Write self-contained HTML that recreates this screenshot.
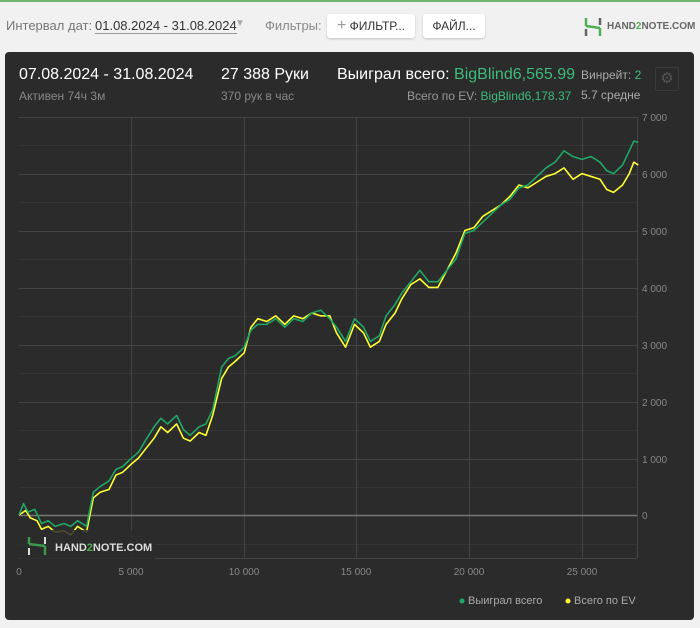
<!DOCTYPE html>
<html><head><meta charset="utf-8"><style>
body{margin:0;width:700px;height:628px;background:#f1f1f1;font-family:"Liberation Sans",sans-serif;position:relative;overflow:hidden}
.top{position:absolute;left:0;top:0;width:700px;height:2px;background:#6fb56f}
.t{position:absolute;white-space:nowrap}
.btn{position:absolute;background:#fff;border-radius:3px;box-shadow:0 1px 2px rgba(0,0,0,.2);font-size:12px;color:#333;line-height:24px;text-align:center}
.panel{position:absolute;left:5px;top:52px;width:689px;height:568px;background:#2b2b2b;border-radius:4px}
.ax{font-size:10px;color:#777}
</style></head><body>
<div class="top"></div>
<div class="t" style="left:6px;top:18px;font-size:13px;color:#777">Интервал дат:</div>
<div class="t" style="left:95px;top:18px;font-size:13px;color:#333;border-bottom:1px solid #999">01.08.2024 - 31.08.2024</div>
<div class="t" style="left:235px;top:18px;font-size:10px;color:#aaa">▼</div>
<div class="t" style="left:265px;top:18px;font-size:13px;color:#888">Фильтры:</div>
<div class="btn" style="left:327px;top:14px;width:88px"><span style="color:#999;font-size:16px">+</span> ФИЛЬТР...</div>
<div class="btn" style="left:423px;top:14px;width:62px">ФАЙЛ...</div>
<svg style="position:absolute;left:583px;top:16px" width="20" height="22"><path d="M3 2v8M3 10l14 2M17 12v8" stroke="#4caf50" stroke-width="2.5" fill="none"/><path d="M3 13v7M17 2v7" stroke="#666" stroke-width="2.5"/></svg>
<div class="t" style="left:607px;top:21px;font-size:10px;font-weight:bold;color:#666">HAND<span style="color:#4caf50">2</span>NOTE.COM</div>
<div class="panel"></div>
<div class="t" style="left:19px;top:66px;font-size:16px;color:#fff">07.08.2024 - 31.08.2024</div>
<div class="t" style="left:19px;top:89px;font-size:12px;color:#888">Активен 74ч 3м</div>
<div class="t" style="left:221px;top:66px;font-size:16px;color:#fff">27 388 Руки</div>
<div class="t" style="left:221px;top:89px;font-size:12px;color:#888">370 рук в час</div>
<div class="t" style="left:337px;top:66px;font-size:16px;color:#fff">Выиграл всего: <span style="color:#3dbb7a">BigBlind6,565.99</span></div>
<div class="t" style="left:407px;top:89px;font-size:12px;color:#999">Всего по EV: <span style="color:#3dbb7a">BigBlind6,178.37</span></div>
<div class="t" style="left:581px;top:68px;font-size:12px;color:#aaa">Винрейт: <span style="color:#3dbb7a">2</span></div>
<div class="t" style="left:581px;top:88px;font-size:12px;color:#aaa">5.7 средне</div>
<div style="position:absolute;left:655px;top:67px;width:22px;height:22px;border:1px solid #3a3a3a;border-radius:2px;color:#555;font-size:15px;text-align:center;line-height:22px">⚙</div>
<svg style="position:absolute;left:0;top:0" width="700" height="628">
<g stroke="#353535" stroke-width="1">
<line x1="19" x2="637" y1="145.5" y2="145.5"/><line x1="19" x2="637" y1="202.5" y2="202.5"/><line x1="19" x2="637" y1="259.5" y2="259.5"/><line x1="19" x2="637" y1="316.5" y2="316.5"/><line x1="19" x2="637" y1="373.5" y2="373.5"/><line x1="19" x2="637" y1="430.5" y2="430.5"/><line x1="19" x2="637" y1="487.5" y2="487.5"/><line x1="19" x2="637" y1="544.5" y2="544.5"/>
</g>
<g stroke="#444" stroke-width="1">
<line x1="19" x2="637" y1="117.5" y2="117.5"/><line x1="19" x2="637" y1="174.5" y2="174.5"/><line x1="19" x2="637" y1="231.5" y2="231.5"/><line x1="19" x2="637" y1="288.5" y2="288.5"/><line x1="19" x2="637" y1="345.5" y2="345.5"/><line x1="19" x2="637" y1="402.5" y2="402.5"/><line x1="19" x2="637" y1="459.5" y2="459.5"/><line x1="19" x2="637" y1="558.5" y2="558.5"/>
<line x1="131.5" x2="131.5" y1="117" y2="558"/><line x1="244.5" x2="244.5" y1="117" y2="558"/><line x1="356.5" x2="356.5" y1="117" y2="558"/><line x1="469.5" x2="469.5" y1="117" y2="558"/><line x1="582.5" x2="582.5" y1="117" y2="558"/><line x1="637.5" x2="637.5" y1="117" y2="558"/>
</g>
<line x1="19" x2="637" y1="515.5" y2="515.5" stroke="#777" stroke-width="1.5"/>
<g transform="translate(19,515) scale(22.52,-56.9)" fill="none" stroke-width="1.6" stroke-linejoin="round">
<polyline vector-effect="non-scaling-stroke" stroke="#ffff33" points="0,0 0.3,0.08 0.5,-0.05 0.8,-0.1 1,-0.25 1.3,-0.2 1.6,-0.3 2,-0.28 2.3,-0.35 2.6,-0.2 3,-0.3 3.3,0.3 3.6,0.4 4,0.45 4.3,0.7 4.6,0.75 5,0.9 5.3,1.0 5.6,1.15 6,1.35 6.3,1.55 6.6,1.45 7,1.6 7.3,1.35 7.6,1.3 8,1.45 8.3,1.4 8.6,1.75 9,2.4 9.3,2.6 9.6,2.7 10,2.85 10.3,3.3 10.6,3.45 11,3.4 11.4,3.5 11.8,3.35 12.2,3.5 12.6,3.45 13,3.55 13.4,3.5 13.8,3.5 14.1,3.2 14.5,2.95 14.9,3.35 15.3,3.2 15.6,2.95 16,3.05 16.3,3.35 16.7,3.55 17,3.8 17.4,4.05 17.8,4.15 18.2,4.0 18.6,4.0 19,4.3 19.4,4.6 19.8,5.0 20.2,5.05 20.6,5.25 21,5.35 21.4,5.45 21.8,5.6 22.2,5.8 22.6,5.75 23,5.85 23.4,5.95 23.8,6.0 24.2,6.1 24.6,5.9 25,6.0 25.4,5.95 25.8,5.9 26.1,5.72 26.4,5.67 26.8,5.8 27.1,6.0 27.3,6.2 27.5,6.15"/>
<polyline vector-effect="non-scaling-stroke" stroke="#20a865" points="0,0 0.2,0.2 0.4,0.05 0.7,0.1 1,-0.15 1.3,-0.1 1.6,-0.2 2,-0.15 2.3,-0.2 2.6,-0.1 3,-0.2 3.3,0.4 3.6,0.5 4,0.6 4.3,0.8 4.6,0.85 5,1.0 5.3,1.1 5.6,1.3 6,1.55 6.3,1.7 6.6,1.6 7,1.75 7.3,1.5 7.6,1.4 8,1.55 8.3,1.6 8.6,1.85 9,2.6 9.3,2.75 9.6,2.8 10,2.95 10.3,3.25 10.6,3.35 11,3.35 11.4,3.45 11.8,3.3 12.2,3.45 12.6,3.4 13,3.55 13.4,3.6 13.8,3.45 14.1,3.3 14.5,3.05 14.9,3.45 15.3,3.3 15.6,3.05 16,3.15 16.3,3.5 16.7,3.7 17,3.9 17.4,4.1 17.8,4.3 18.2,4.1 18.6,4.1 19,4.3 19.4,4.5 19.8,4.95 20.2,5.0 20.6,5.15 21,5.3 21.4,5.45 21.8,5.55 22.2,5.75 22.6,5.8 23,5.95 23.4,6.1 23.8,6.2 24.2,6.4 24.6,6.3 25,6.25 25.4,6.3 25.8,6.2 26.1,6.05 26.4,6.0 26.8,6.15 27.1,6.4 27.3,6.57 27.5,6.55"/>
</g>
<g class="ax" fill="#888" font-size="10" font-family="Liberation Sans">
<text x="642" y="121">7 000</text><text x="642" y="178">6 000</text><text x="642" y="235">5 000</text><text x="642" y="292">4 000</text><text x="642" y="349">3 000</text><text x="642" y="406">2 000</text><text x="642" y="463">1 000</text><text x="642" y="519">0</text>
<text x="19" y="575" text-anchor="middle">0</text><text x="131" y="575" text-anchor="middle">5 000</text><text x="244" y="575" text-anchor="middle">10 000</text><text x="356" y="575" text-anchor="middle">15 000</text><text x="469" y="575" text-anchor="middle">20 000</text><text x="582" y="575" text-anchor="middle">25 000</text>
</g>
<rect x="20" y="530" width="135" height="30" fill="#2b2b2b" opacity=".85"/>
<path d="M29 537v7M29 544l16 2M45 546v9" stroke="#3a9a4a" stroke-width="2.5" fill="none"/>
<path d="M29 548v7M45 537v7" stroke="#ddd" stroke-width="2"/>
<text x="55" y="551" fill="#ddd" font-size="11" font-weight="bold" font-family="Liberation Sans">HAND<tspan fill="#4caf50">2</tspan>NOTE.COM</text>
<circle cx="462" cy="601" r="2.5" fill="#20a865"/>
<text x="468" y="604" fill="#aaa" font-size="11" font-family="Liberation Sans">Выиграл всего</text>
<circle cx="568" cy="601" r="2.5" fill="#ffff33"/>
<text x="574" y="604" fill="#aaa" font-size="11" font-family="Liberation Sans">Всего по EV</text>
</svg>
</body></html>
